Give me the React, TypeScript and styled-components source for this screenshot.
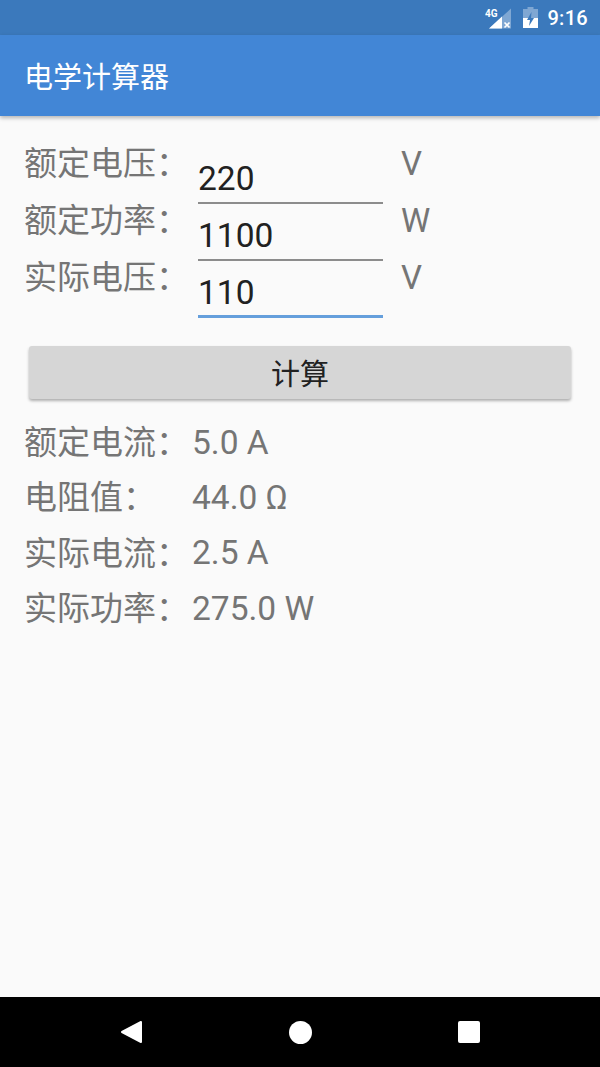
import React from "react";
import styled, { createGlobalStyle } from "styled-components";

const Global = createGlobalStyle`
  html, body { margin: 0; padding: 0; background: #fafafa; }
  #root { width: 600px; height: 1067px; }
  * { box-sizing: border-box; }
`;

const Screen = styled.div`
  width: 600px;
  height: 1067px;
  display: flex;
  flex-direction: column;
  background: #fafafa;
  font-family: Roboto, "Noto Sans CJK SC", sans-serif;
  overflow: hidden;
`;

const StatusBar = styled.div`
  height: 35px;
  flex: none;
  background: #3b79bc;
  display: flex;
  align-items: center;
  justify-content: flex-end;
  padding-right: 12px;
  color: #fff;
`;

const Clock = styled.span`
  font-size: 20px;
  font-weight: 500;
  margin-left: 9px;
  letter-spacing: 0.3px;
`;

const AppBar = styled.header`
  height: 81px;
  flex: none;
  background: #4286d6;
  display: flex;
  align-items: center;
  padding: 0 24px 2px;
  color: #fff;
  font-size: 29px;
  box-shadow: 0 2px 4px rgba(0, 0, 0, 0.28);
  position: relative;
`;

const Content = styled.main`
  flex: 1;
  display: flex;
  flex-direction: column;
  padding: 33px 24px 0;
`;

const Form = styled.div`
  display: flex;
  flex-direction: column;
  gap: 0.5px;
`;

const FormRow = styled.div`
  height: 56.5px;
  display: grid;
  grid-template-columns: 174px 185px auto;
`;

const Label = styled.div`
  font-size: 33px;
  line-height: 30px;
  color: #757575;
  white-space: nowrap;
`;

const Field = styled.div<{ $focused?: boolean }>`
  height: 55px;
  padding: 8px 0 0;
  font-size: 33.5px;
  line-height: 44px;
  color: #212121;
  border-bottom: ${(p) => (p.$focused ? "3px solid #659fdc" : "2px solid #8c8c8c")};
`;

const Unit = styled.div`
  font-size: 33px;
  line-height: 30px;
  padding-left: 18px;
  color: #757575;
`;

const ComputeButton = styled.button`
  width: 542px;
  height: 53px;
  margin: 26px 0 0 5px;
  padding: 0;
  border: none;
  border-radius: 3px;
  background: #d6d6d6;
  color: #212121;
  font-family: inherit;
  font-size: 29px;
  box-shadow: 0 2px 3px rgba(0, 0, 0, 0.3);
`;

const Results = styled.div`
  margin-top: 14px;
  display: flex;
  flex-direction: column;
`;

const ResultRow = styled.div`
  height: 55.3px;
  display: grid;
  grid-template-columns: 168px auto;
  align-items: center;
  color: #757575;
  font-size: 33px;
`;

const ResultValue = styled.span`
  font-size: 33.5px;
  padding-top: 4px;
  white-space: nowrap;
`;

const NavBar = styled.nav`
  height: 70px;
  flex: none;
  background: #000;
  display: flex;
  align-items: center;
  justify-content: space-between;
  padding: 0 120px 0 119px;
`;

const StatusIcons = () => (
  <>
    <svg width="26" height="30" viewBox="0 0 26 30" aria-hidden="true">
      <path d="M4 25.5 L26 5.5 V25.5 Z" fill="#fff" fillOpacity="0.35" />
      <path d="M4 25.5 L17 13.5 V25.5 Z" fill="#fff" />
      <path d="M19.5 19.5 l5 5 m0 -5 l-5 5" stroke="#fff" strokeWidth="1.6" />
      <text x="0" y="13.5" fontSize="10" fontWeight="700" fill="#fff" fontFamily="Roboto, sans-serif">4G</text>
    </svg>
    <svg width="15" height="21" viewBox="0 0 15 21" style={{ marginLeft: 12 }} aria-hidden="true">
      <path d="M4.5 0 H10.5 V2 H15 V21 H0 V2 H4.5 Z" fill="#fff" fillOpacity="0.35" />
      <path d="M0 11 H15 V21 H0 Z" fill="#fff" />
      <path d="M8.5 5 L4 13 H7 L6 19 L11 11 H8 Z" fill="#3b79bc" />
    </svg>
  </>
);

const rows = [
  { label: "额定电压：", value: "220", unit: "V" },
  { label: "额定功率：", value: "1100", unit: "W" },
  { label: "实际电压：", value: "110", unit: "V", focused: true },
];

const results = [
  ["额定电流：", "5.0 A"],
  ["电阻值：", "44.0 Ω"],
  ["实际电流：", "2.5 A"],
  ["实际功率：", "275.0 W"],
];

export default function App() {
  return (
    <Screen lang="zh-CN">
      <Global />
      <StatusBar>
        <StatusIcons />
        <Clock>9:16</Clock>
      </StatusBar>
      <AppBar>电学计算器</AppBar>
      <Content>
        <Form>
          {rows.map((r) => (
            <FormRow key={r.label}>
              <Label>{r.label}</Label>
              <Field $focused={r.focused}>{r.value}</Field>
              <Unit>{r.unit}</Unit>
            </FormRow>
          ))}
        </Form>
        <ComputeButton>计算</ComputeButton>
        <Results>
          {results.map(([k, v]) => (
            <ResultRow key={k}>
              <span>{k}</span>
              <ResultValue>{v}</ResultValue>
            </ResultRow>
          ))}
        </Results>
      </Content>
      <NavBar>
        <svg width="24" height="26" viewBox="0 0 24 26" aria-hidden="true">
          <path d="M22 3 V23 L3 13 Z" fill="#fff" stroke="#fff" strokeWidth="2" strokeLinejoin="round" />
        </svg>
        <svg width="23" height="23" viewBox="0 0 24 24" aria-hidden="true">
          <circle cx="12" cy="12" r="12" fill="#fff" />
        </svg>
        <svg width="22" height="22" viewBox="0 0 22 22" aria-hidden="true">
          <rect width="22" height="22" rx="2" fill="#fff" />
        </svg>
      </NavBar>
    </Screen>
  );
}
